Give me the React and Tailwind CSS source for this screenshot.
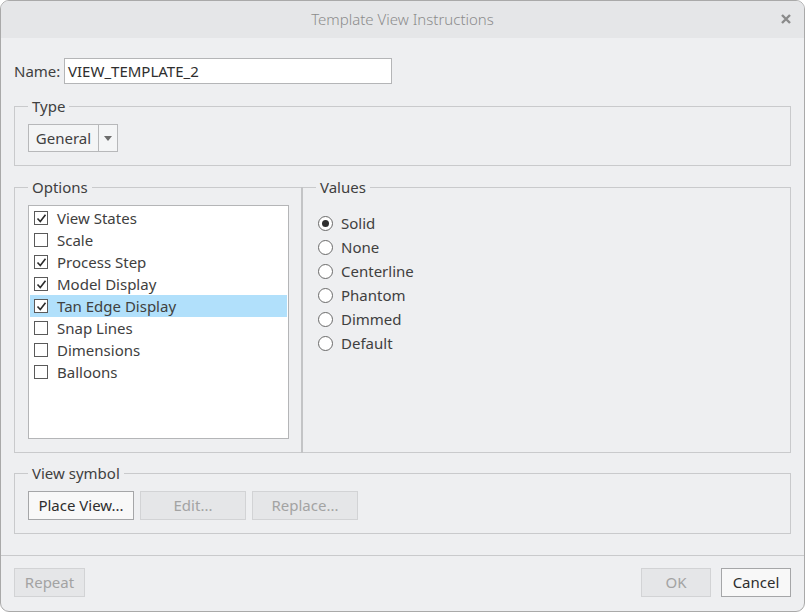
import { useState } from "react";

const OPTIONS = [
  { label: "View States", checked: true },
  { label: "Scale", checked: false },
  { label: "Process Step", checked: true },
  { label: "Model Display", checked: true },
  { label: "Tan Edge Display", checked: true },
  { label: "Snap Lines", checked: false },
  { label: "Dimensions", checked: false },
  { label: "Balloons", checked: false },
];

const VALUES = ["Solid", "None", "Centerline", "Phantom", "Dimmed", "Default"];

function Checkbox({ checked }) {
  return (
    <span className="w-[14px] h-[14px] border border-[#5a5a5a] bg-white flex items-center justify-center shrink-0">
      {checked && (
        <svg width="11" height="11" viewBox="0 0 11 11" fill="none">
          <path d="M1.5 5.5l2.8 3L9.5 1.8" stroke="#2b2b2b" strokeWidth="1.6" />
        </svg>
      )}
    </span>
  );
}

function Radio({ selected }) {
  return (
    <span className="w-[15px] h-[15px] rounded-full border border-[#6a6a6a] bg-white flex items-center justify-center shrink-0">
      {selected && <span className="w-[7px] h-[7px] rounded-full bg-[#2f2f2f]" />}
    </span>
  );
}

function Group({ label, className = "", children }) {
  return (
    <fieldset className={`border border-[#c9cacc] ${className}`}>
      <legend className="px-[4px] leading-[20px] text-[#404040]">{label}</legend>
      {children}
    </fieldset>
  );
}

export default function App() {
  const [selected, setSelected] = useState(4);
  const [value, setValue] = useState(0);

  return (
    <div
      className="w-[805px] h-[612px] flex flex-col bg-[#eeeff1] border border-[#a9a9a9] rounded-[9px] overflow-hidden text-[15px] text-[#404040]"
      style={{ fontFamily: '"Noto Sans", "Open Sans", sans-serif' }}
    >
      {/* Title bar */}
      <div className="h-[37px] shrink-0 bg-[#e5e6e8] flex items-center relative">
        <div className="flex-1 text-center text-[#8c8c8c] text-[15px] font-light">Template View Instructions</div>
        <span className="absolute right-[11px] top-[11px]">
          <svg width="14" height="14" viewBox="0 0 14 14">
            <path d="M3 3l8 8M11 3l-8 8" stroke="#8a8a8a" strokeWidth="2.4" />
          </svg>
        </span>
      </div>

      {/* Body */}
      <div className="flex-1 flex flex-col px-[13px] pt-[20px]">
        <div className="flex items-center h-[26px]">
          <span className="w-[50px]">Name:</span>
          <div className="w-[328px] h-[26px] bg-white border border-[#b4b5b7] flex items-center px-[3px] text-[#2e2e2e]">
            VIEW_TEMPLATE_2
          </div>
        </div>

        <Group label="Type" className="mt-[12px] px-[13px] pt-[8px] pb-[13px]">
          <div className="flex h-[28px] w-[90px] border border-[#b7b8ba] bg-[#f4f5f6]">
            <span className="w-[70px] border-r border-[#b7b8ba] flex items-center justify-center">General</span>
            <span className="flex-1 flex items-center justify-center">
              <svg width="8" height="5" viewBox="0 0 8 5">
                <path d="M0 0h8L4 5z" fill="#6c6c6c" />
              </svg>
            </span>
          </div>
        </Group>

        <div className="mt-[11px] flex h-[276px]">
          <Group label="Options" className="w-[287px] pl-[13px] pr-[12px] pt-[8px] pb-[13px] border-r-0">
            <div className="h-[234px] bg-white border border-[#b4b5b7] pt-[1px] px-[1px]">
              {OPTIONS.map((o, i) => (
                <div
                  key={o.label}
                  onClick={() => setSelected(i)}
                  className={`h-[22px] flex items-center gap-[9px] px-[4px] ${selected === i ? "bg-[#b1e0fb]" : ""}`}
                >
                  <Checkbox checked={o.checked} />
                  <span className="leading-none">{o.label}</span>
                </div>
              ))}
            </div>
          </Group>
          <div className="w-[2px] bg-[#c3c4c6] mt-[10px]" />
          <Group label="Values" className="flex-1 pl-[13px] pr-[13px] pt-[14px] border-l-0">
            <div className="flex flex-col pl-[2px]">
              {VALUES.map((v, i) => (
                <div key={v} onClick={() => setValue(i)} className="h-[24px] flex items-center gap-[8px]">
                  <Radio selected={value === i} />
                  <span className="leading-none">{v}</span>
                </div>
              ))}
            </div>
          </Group>
        </div>

        <Group label="View symbol" className="mt-[10px] px-[13px] pt-[8px] pb-[13px]">
          <div className="flex gap-[6px]">
            <button className="w-[106px] h-[29px] bg-[#f8f8f8] border border-[#a5a6a8] text-[#2e2e2e]">Place View...</button>
            <button className="w-[106px] h-[29px] bg-[#e5e6e8] border border-[#d2d3d5] text-[#a3a3a3]">Edit...</button>
            <button className="w-[106px] h-[29px] bg-[#e5e6e8] border border-[#d2d3d5] text-[#a3a3a3]">Replace...</button>
          </div>
        </Group>
      </div>

      {/* Footer */}
      <div className="h-[56px] shrink-0 border-t border-[#c9cacc] flex items-start pt-[12px] px-[13px]">
        <button className="w-[71px] h-[29px] bg-[#e5e6e8] border border-[#d2d3d5] text-[#a3a3a3]">Repeat</button>
        <div className="flex-1" />
        <button className="w-[70px] h-[29px] bg-[#e5e6e8] border border-[#d2d3d5] text-[#a3a3a3]">OK</button>
        <button className="ml-[10px] w-[70px] h-[29px] bg-[#f8f8f8] border border-[#a5a6a8] text-[#2e2e2e]">Cancel</button>
      </div>
    </div>
  );
}
